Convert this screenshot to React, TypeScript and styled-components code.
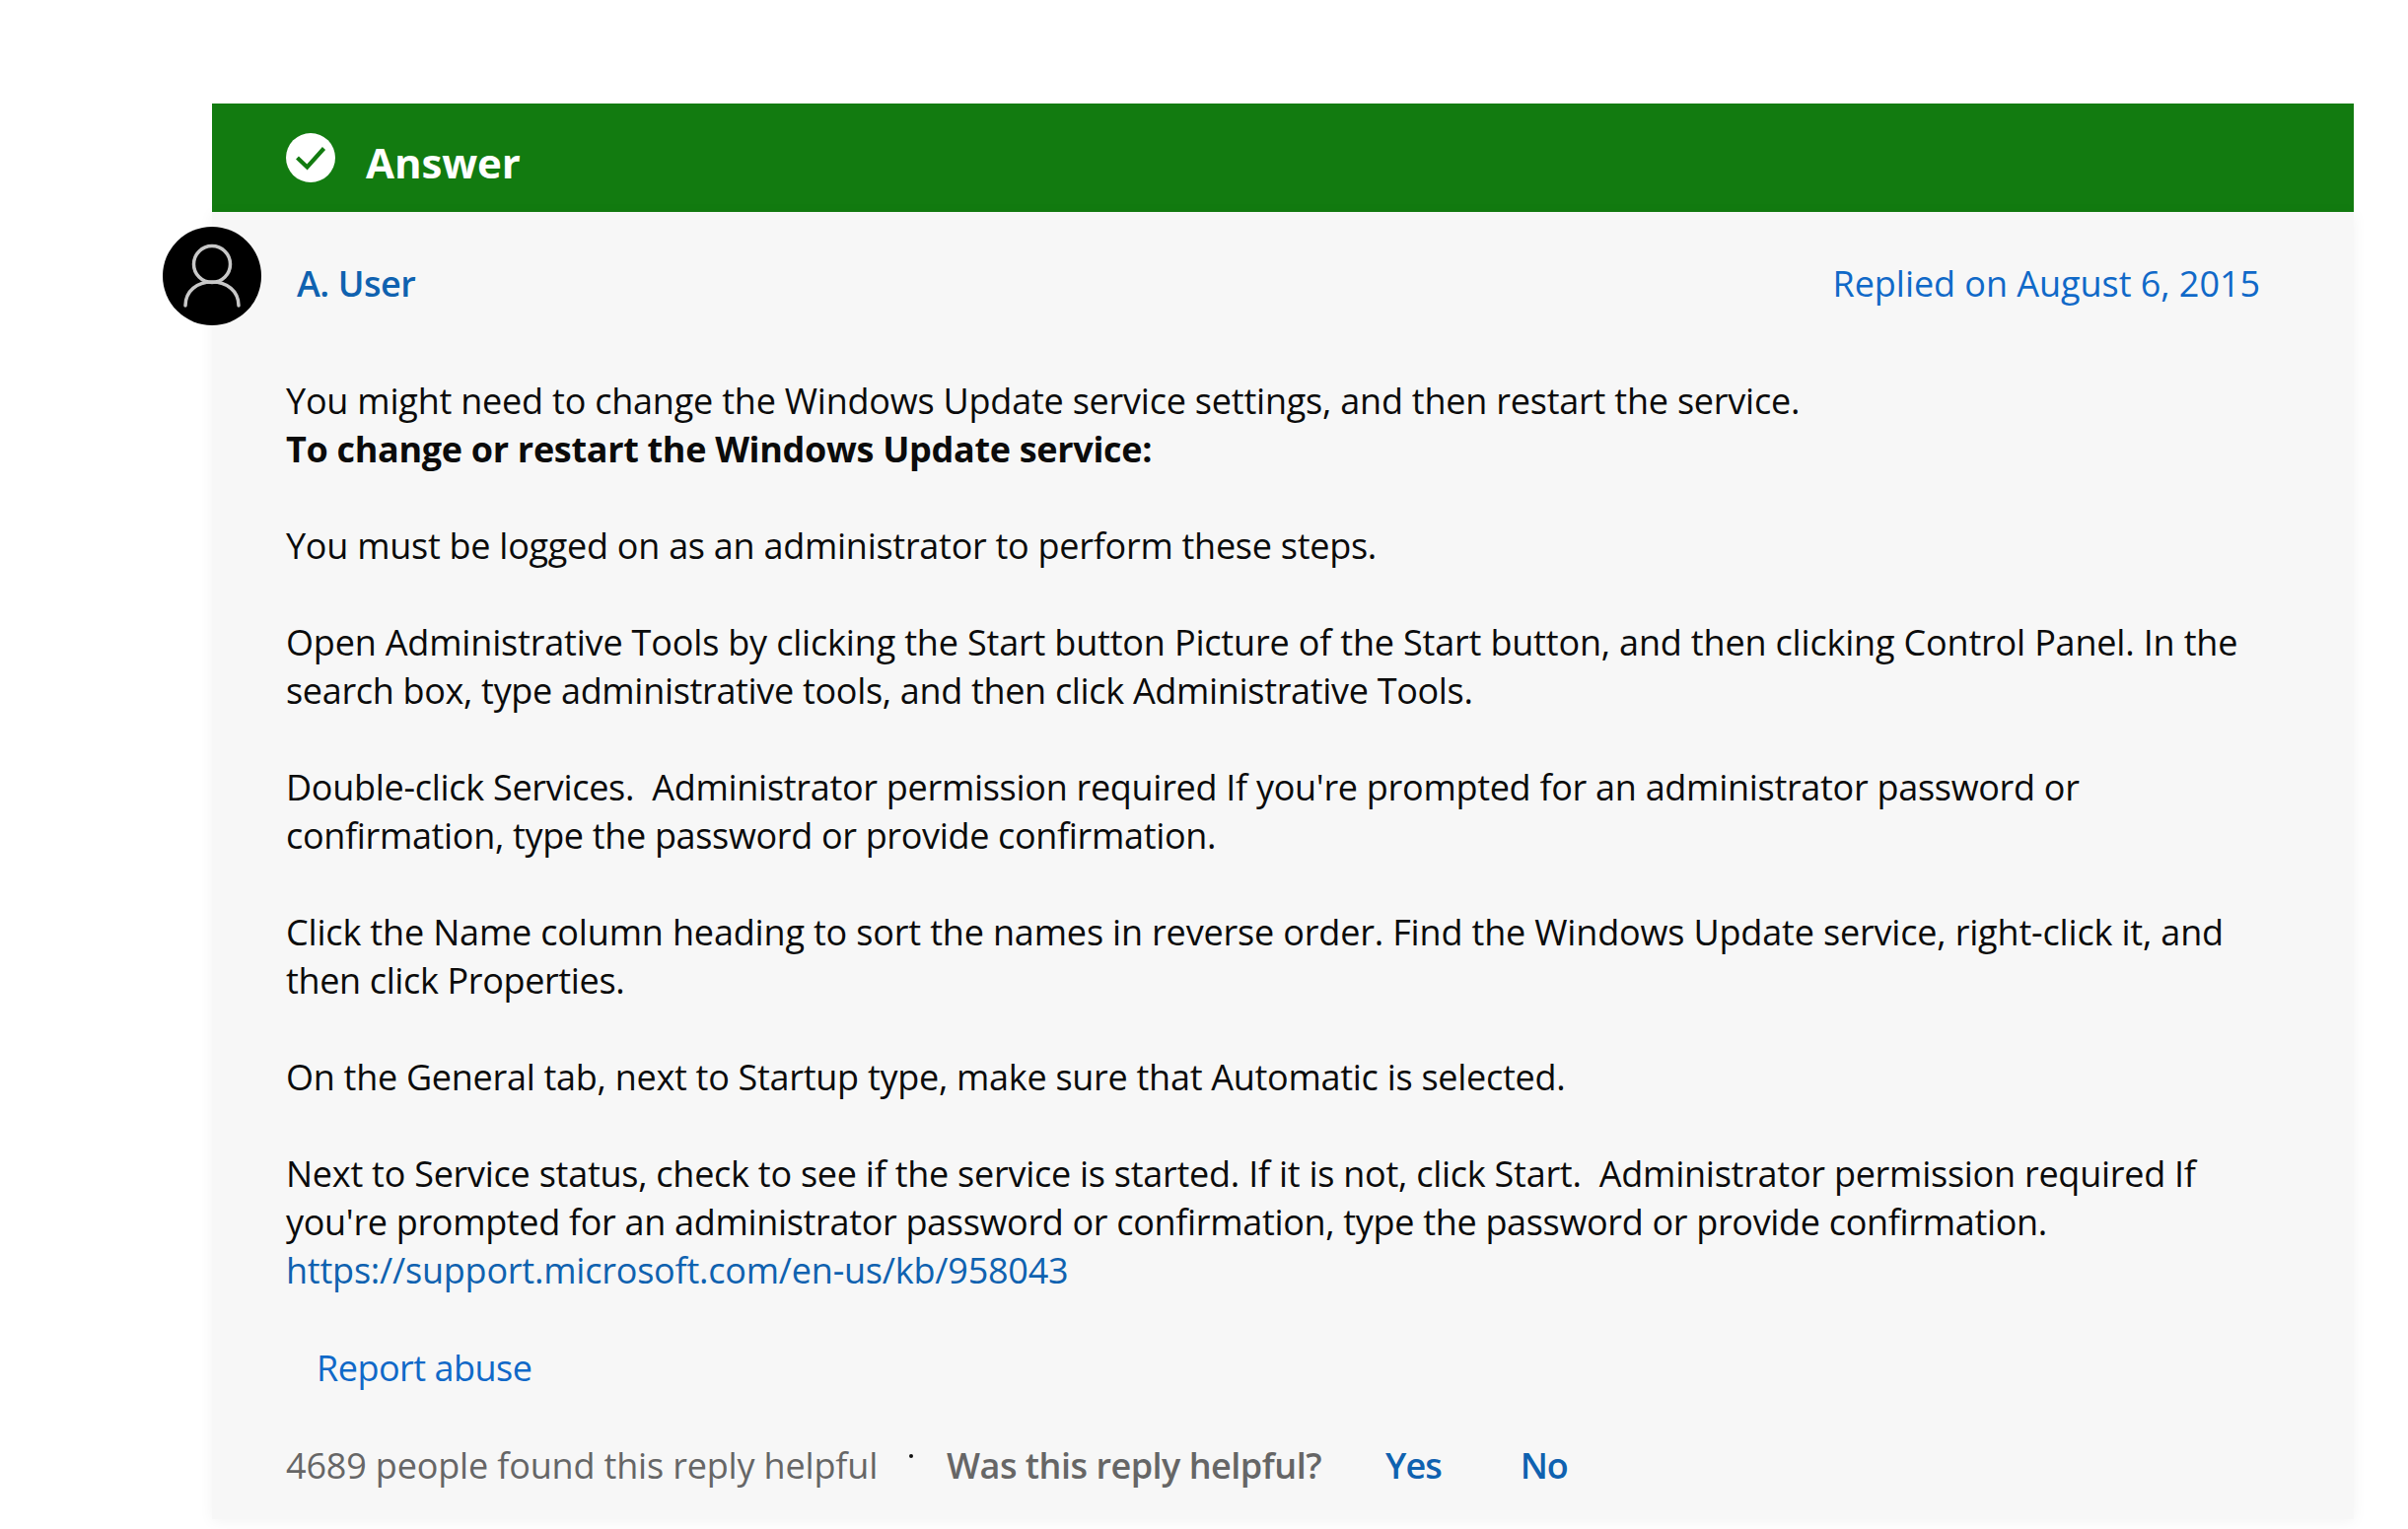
import React from 'react';
import styled, { createGlobalStyle } from 'styled-components';

const Global = createGlobalStyle`
  html, body { margin: 0; padding: 0; background: #fff; }
  body { font-family: "Open Sans", "Noto Sans", "Liberation Sans", sans-serif; height: 1551px; overflow: hidden; }
`;

const Page = styled.main`
  padding: 105px 55px 0 215px;
  height: 1551px;
  box-sizing: border-box;
`;

const Banner = styled.header`
  height: 110px;
  background: #127b10;
  display: flex;
  align-items: center;
  padding-left: 75px;
  gap: 31px;
  color: #fff;
`;

const BannerTitle = styled.h2`
  margin: 9px 0 0;
  font-size: 42px;
  line-height: 48px;
  font-weight: 700;
  letter-spacing: -0.1px;
`;

const CheckIcon = styled.svg`
  width: 50px;
  height: 50px;
  flex: none;
`;

const Panel = styled.article`
  background: #f7f7f7;
  height: 1326px;
  box-shadow: 0 2px 14px rgba(0, 0, 0, 0.05);
`;

const AuthorRow = styled.div`
  display: flex;
  align-items: center;
  height: 100px;
  padding: 15px 95px 0 0;
  margin-left: -50px;
`;

const Avatar = styled.svg`
  width: 100px;
  height: 100px;
  flex: none;
`;

const Author = styled.a`
  margin: 14px 0 0 36px;
  font-size: 36px;
  font-weight: 600;
  letter-spacing: -0.45px;
  color: #0f62b0;
`;

const Replied = styled.a`
  margin: 14px 0 0 auto;
  font-size: 36px;
  letter-spacing: -0.05px;
  color: #1069c8;
`;

const Body = styled.div`
  margin: 52px 0 0 75px;
  font-size: 36px;
  line-height: 49px;
  color: #0b0b0b;
  white-space: nowrap;
`;

const Paragraph = styled.p`
  margin: 0 0 49px;
`;

const Line = styled.span<{ $track: number; $bold?: boolean; $link?: boolean }>`
  display: block;
  letter-spacing: ${p => p.$track}px;
  font-weight: ${p => (p.$bold ? 700 : 400)};
  color: ${p => (p.$link ? '#0f62b0' : 'inherit')};
`;

const Report = styled.a`
  display: block;
  margin: 0 0 0 106px;
  padding-top: 1px;
  font-size: 36px;
  line-height: 49px;
  letter-spacing: -0.5px;
  color: #1069c8;
`;

const Helpful = styled.div`
  display: flex;
  align-items: center;
  margin: 50px 0 0 75px;
  font-size: 36px;
  line-height: 49px;
  letter-spacing: -0.17px;
  color: #666;
`;

const Dot = styled.span`
  width: 4px;
  height: 4px;
  border-radius: 50%;
  background: #111;
  margin: -20px 34px 0 32px;
`;

const Question = styled.strong`
  font-weight: 600;
  letter-spacing: -0.5px;
`;

const Vote = styled.a<{ $gap: number }>`
  margin-left: ${p => p.$gap}px;
  font-weight: 600;
  letter-spacing: -1px;
  color: #0f62b0;
`;

export default function App() {
  return (
    <Page>
      <Global />
      <Banner>
        <CheckIcon viewBox="0 0 50 50" aria-hidden="true">
          <circle cx="25" cy="25" r="25" fill="#fff" />
          <path d="M11.5 25 L21.5 34.5 L38.5 15.5" fill="none" stroke="#127b10" strokeWidth="4.2" />
        </CheckIcon>
        <BannerTitle>Answer</BannerTitle>
      </Banner>
      <Panel>
        <AuthorRow>
          <Avatar viewBox="0 0 100 100" aria-hidden="true">
            <circle cx="50" cy="50" r="50" fill="#000" />
            <circle cx="50" cy="38" r="18.5" fill="none" stroke="#c8c8c8" strokeWidth="3.5" />
            <path d="M23 80 C23 65 35 56 50 56 C65 56 77 65 77 80" fill="none" stroke="#c8c8c8" strokeWidth="3.5" strokeLinecap="round" />
          </Avatar>
          <Author>A. User</Author>
          <Replied>Replied on August 6, 2015</Replied>
        </AuthorRow>
        <Body>
          <Paragraph>
            <Line $track={-0.22}>You might need to change the Windows Update service settings, and then restart the service.</Line>
            <Line $track={-0.32} $bold>To change or restart the Windows Update service:</Line>
          </Paragraph>
          <Paragraph>
            <Line $track={-0.27}>You must be logged on as an administrator to perform these steps.</Line>
          </Paragraph>
          <Paragraph>
            <Line $track={-0.18}>Open Administrative Tools by clicking the Start button Picture of the Start button, and then clicking Control Panel. In the</Line>
            <Line $track={-0.32}>search box, type administrative tools, and then click Administrative Tools.</Line>
          </Paragraph>
          <Paragraph>
            <Line $track={-0.29}>Double-click Services.&nbsp; Administrator permission required If you're prompted for an administrator password or</Line>
            <Line $track={-0.33}>confirmation, type the password or provide confirmation.</Line>
          </Paragraph>
          <Paragraph>
            <Line $track={-0.17}>Click the Name column heading to sort the names in reverse order. Find the Windows Update service, right-click it, and</Line>
            <Line $track={-0.36}>then click Properties.</Line>
          </Paragraph>
          <Paragraph>
            <Line $track={-0.28}>On the General tab, next to Startup type, make sure that Automatic is selected.</Line>
          </Paragraph>
          <Paragraph>
            <Line $track={-0.255}>Next to Service status, check to see if the service is started. If it is not, click Start.&nbsp; Administrator permission required If</Line>
            <Line $track={-0.32}>you're prompted for an administrator password or confirmation, type the password or provide confirmation.</Line>
            <Line $track={-0.22} $link>https://support.microsoft.com/en-us/kb/958043</Line>
          </Paragraph>
        </Body>
        <Report>Report abuse</Report>
        <Helpful>
          <span>4689 people found this reply helpful</span>
          <Dot />
          <Question>Was this reply helpful?</Question>
          <Vote $gap={65}>Yes</Vote>
          <Vote $gap={80}>No</Vote>
        </Helpful>
      </Panel>
    </Page>
  );
}
